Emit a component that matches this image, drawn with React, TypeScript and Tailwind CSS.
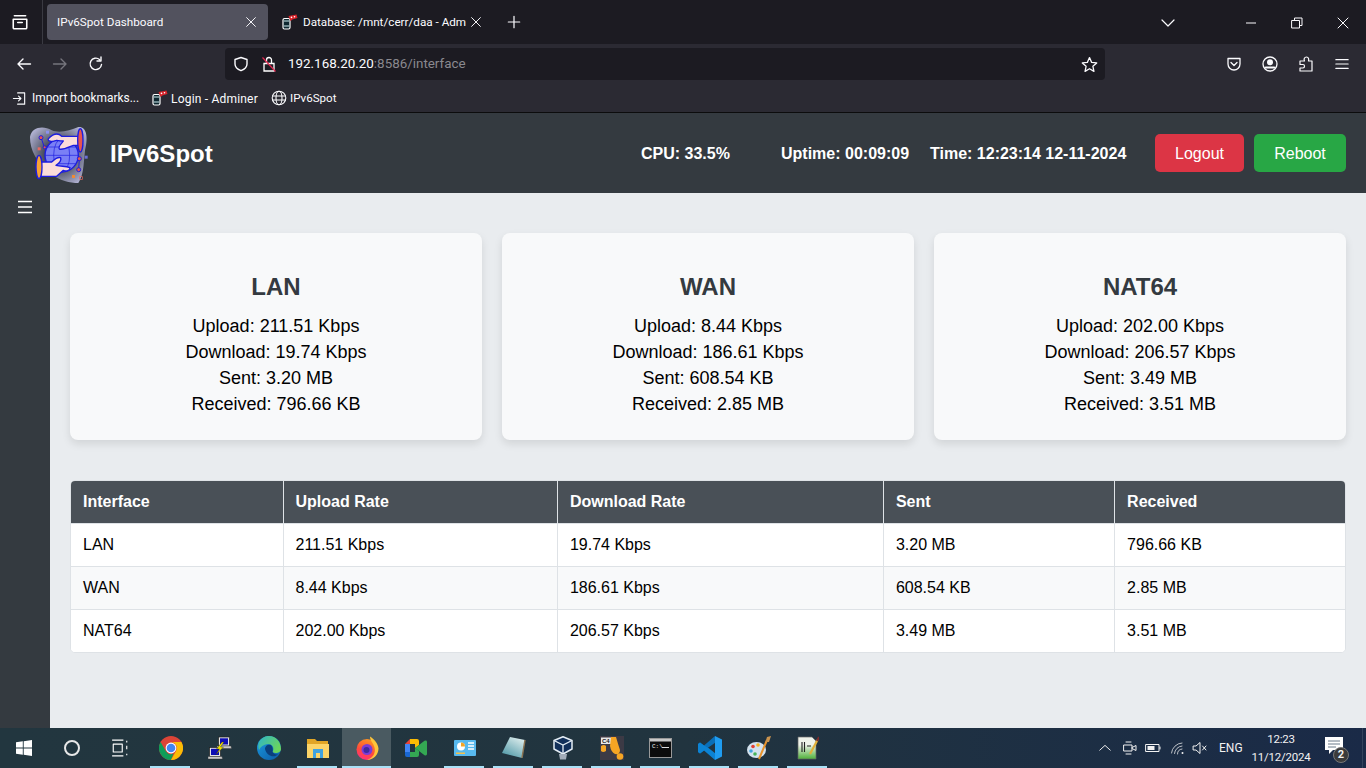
import type { ReactNode } from "react";

const cards = [
  { name: "LAN", upload: "211.51 Kbps", download: "19.74 Kbps", sent: "3.20 MB", received: "796.66 KB" },
  { name: "WAN", upload: "8.44 Kbps", download: "186.61 Kbps", sent: "608.54 KB", received: "2.85 MB" },
  { name: "NAT64", upload: "202.00 Kbps", download: "206.57 Kbps", sent: "3.49 MB", received: "3.51 MB" },
];

function Ic({ size = 16, children, className = "" }: { size?: number; children: ReactNode; className?: string }) {
  return (
    <svg width={size} height={size} viewBox="0 0 16 16" fill="none" stroke="currentColor" strokeWidth="1.4" strokeLinecap="round" strokeLinejoin="round" className={`shrink-0 ${className}`}>
      {children}
    </svg>
  );
}

function AdminerIcon() {
  return (
    <svg width="16" height="16" viewBox="0 0 16 16" className="shrink-0">
      <rect x="1" y="4.5" width="7" height="10.5" rx="1.5" fill="#0f2730" stroke="#fff" strokeWidth="1.2" />
      <path d="M2 7 H7 M2 12 H7" stroke="#cfeef0" strokeWidth="1" />
      <path d="M6.5 2 L14.5 0.5 L15.5 4 L10.5 5.5 L8.5 7 Z" fill="#d8232a" />
      <circle cx="9.5" cy="3.4" r=".8" fill="#fff" />
      <circle cx="12.5" cy="2.7" r=".8" fill="#fff" />
    </svg>
  );
}

function Logo() {
  const blue = "#1c1ce0";
  return (
    <svg width="80" height="72" viewBox="0 0 240 216" className="shrink-0">
      <defs>
        <radialGradient id="blob" cx="0.5" cy="0.5" r="0.62">
          <stop offset="0.35" stopColor="#3f4352" />
          <stop offset="1" stopColor="#b4b5d6" />
        </radialGradient>
      </defs>
      <path d="M30 60 C35 30 70 25 95 40 C120 50 150 40 175 30 C200 28 205 60 195 100 C190 150 190 175 175 198 C150 198 120 190 90 170 C50 135 30 100 30 60 Z" fill="url(#blob)" />
      <circle cx="125" cy="115" r="50" fill="#7a80f5" stroke={blue} strokeWidth="4" />
      <ellipse cx="125" cy="115" rx="24" ry="50" fill="none" stroke={blue} strokeWidth="2" />
      <path d="M75 115 H175 M84 90 H166 M84 140 H166" stroke={blue} strokeWidth="2" />
      <path d="M178 58 H125 C115 48 100 50 85 65 C82 74 95 75 110 70 C120 72 125 72 130 72 C125 80 113 88 118 96 C130 100 150 88 160 85 H178 Z" fill="#fbdcd9" stroke={blue} strokeWidth="4" strokeLinejoin="round" />
      <path d="M60 135 H95 C105 125 115 120 122 122 C125 130 115 140 108 145 C125 150 135 145 150 152 C150 160 140 165 130 160 L110 178 H60 Z" fill="#fbdcd9" stroke={blue} strokeWidth="4" strokeLinejoin="round" />
      <ellipse cx="181" cy="70" rx="8" ry="35" fill="#e8544e" stroke={blue} strokeWidth="4" />
      <ellipse cx="57" cy="150" rx="9" ry="35" fill="#f7a234" stroke={blue} strokeWidth="4" />
      <path d="M63 62 L73 90 M178 125 L176 158" stroke={blue} strokeWidth="3" />
      <circle cx="63" cy="62" r="6" fill="#e8544e" stroke={blue} strokeWidth="3" />
      <circle cx="74" cy="91" r="4.5" fill="#e8544e" stroke={blue} strokeWidth="3" />
      <circle cx="178" cy="125" r="6" fill="#e8544e" stroke={blue} strokeWidth="3" />
      <circle cx="176" cy="158" r="6" fill="#e8544e" stroke={blue} strokeWidth="3" />
      <rect x="78" y="41" width="9" height="9" fill="#8d91ee" />
      <rect x="53" y="91" width="9" height="9" fill="#e76a62" />
      <rect x="194" y="116" width="9" height="9" fill="#6c70d8" />
      <rect x="156" y="174" width="9" height="9" fill="#f08a34" />
      <rect x="179" y="179" width="8" height="8" fill="none" stroke="#e76a62" strokeWidth="2" />
    </svg>
  );
}

function BrowserChrome() {
  return (
    <div className="shrink-0 text-[#fbfbfe] font-['Roboto',sans-serif]">
      <div className="h-[44px] bg-[#1c1b22] flex items-center">
        <div className="w-[43px] h-full flex items-center justify-center border-r border-[#3a3a42]">
          <Ic size={18} className="text-white -ml-[3px]">
            <path d="M3 2.5 H13 M2 5.5 H14 V13 Q14 14 13 14 H3 Q2 14 2 13 Z M6 8.5 H10" />
          </Ic>
        </div>
        <div className="ml-[4px] w-[221px] h-[36px] rounded-[4px] bg-[#52525e] flex items-center justify-between pl-[10px] pr-[10px]">
          <span className="text-[11.7px] text-[#fbfbfe] pt-[1px]">IPv6Spot Dashboard</span>
          <Ic size={14}><path d="M3 3 L13 13 M13 3 L3 13" strokeWidth="1.1" /></Ic>
        </div>
        <div className="w-[222px] h-[36px] flex items-center pl-[14px]">
          <AdminerIcon />
          <span className="ml-[5px] text-[11.7px] w-[164px] whitespace-nowrap pt-[1px]">Database: /mnt/cerr/daa - Adm</span>
          <Ic size={14} className="ml-[2px]"><path d="M3 3 L13 13 M13 3 L3 13" strokeWidth="1.1" /></Ic>
        </div>
        <div className="ml-[17px] w-[14px] flex items-center justify-center">
          <Ic size={14}><path d="M8 1.5 V14.5 M1.5 8 H14.5" /></Ic>
        </div>
        <div className="ml-auto flex items-center pt-[1px]">
          <Ic size={16} className="mr-[52px]"><path d="M2 5 L8 11 L14 5" strokeWidth="1.2" /></Ic>
          <div className="w-[46px] flex justify-center"><Ic size={16}><path d="M3 8 H13" strokeWidth="1" strokeLinecap="butt" /></Ic></div>
          <div className="w-[46px] flex justify-center"><Ic size={16}><path d="M3 5.5 H10.5 V13 H3 Z M5.5 5.5 V3 H13 V10.5 H10.5" strokeWidth="1" /></Ic></div>
          <div className="w-[46px] flex justify-center"><Ic size={16}><path d="M3 3 L13 13 M13 3 L3 13" strokeWidth="1" /></Ic></div>
        </div>
      </div>
      <div className="h-[40px] bg-[#2b2a33] flex items-center">
        <div className="w-[48px] flex justify-center"><Ic size={16}><path d="M14.5 8 H2 M7 3 L2 8 L7 13" /></Ic></div>
        <div className="w-[24px] flex justify-center text-[#76757d]"><Ic size={16}><path d="M1.5 8 H14 M9 3 L14 8 L9 13" /></Ic></div>
        <div className="w-[48px] flex justify-center"><Ic size={16}><path d="M13.5 8.5 A5.7 5.7 0 1 1 11.5 3.5 M13 1 V5 H9" /></Ic></div>
        <div className="ml-[105px] w-[880px] h-[32px] rounded-[4px] bg-[#1c1b22] flex items-center">
          <Ic size={16} className="ml-[8px]"><path d="M8 1.5 L14 3.5 V8 C14 11 11 13.5 8 14.7 C5 13.5 2 11 2 8 V3.5 Z" /></Ic>
          <svg width="16" height="16" viewBox="0 0 16 16" className="ml-[12px] shrink-0" fill="none">
            <path d="M3 7.5 H13 V15 H3 Z M5.5 7.5 V4 A2.5 2.5 0 0 1 10.5 4 V7.5" stroke="#fff" strokeWidth="1.3" />
            <path d="M1.5 1.5 L14.5 15.5" stroke="#e22850" strokeWidth="1.2" />
          </svg>
          <span className="ml-[11px] text-[13.4px] text-[#fbfbfe] pt-[1px]">192.168.20.20<span className="text-[#8a898f]">:8586/interface</span></span>
          <Ic size={17} className="ml-auto mr-[7px]"><path d="M8 1.5 L10 6 L14.8 6.5 L11.2 9.7 L12.2 14.5 L8 12 L3.8 14.5 L4.8 9.7 L1.2 6.5 L6 6 Z" strokeWidth="1.2" /></Ic>
        </div>
        <div className="ml-auto flex items-center">
          <div className="w-[37px] flex justify-center"><Ic size={16}><path d="M2 2.5 H14 V8 A6 6 0 0 1 2 8 Z M5 6.5 L8 9.5 L11 6.5" strokeWidth="1.3" /></Ic></div>
          <div className="w-[36px] flex justify-center"><Ic size={16}><circle cx="8" cy="8" r="7" strokeWidth="1.3" /><circle cx="8" cy="6.3" r="2.3" fill="currentColor" /><path d="M3.8 11.5 H12.2" strokeWidth="2" /></Ic></div>
          <div className="w-[36px] flex justify-center"><Ic size={16}><path d="M6.5 5 C5.5 3 6.5 1 8.5 1 C10.5 1 11 3 10.5 5 H14 V15 H2 V12 H5 C7 12 7 8.5 5 8.5 H2 V5 Z" strokeWidth="1.2" /></Ic></div>
          <div className="w-[36px] mr-[6px] flex justify-center"><Ic size={14}><path d="M1 3 H15 M1 8 H15 M1 13 H15" /></Ic></div>
        </div>
      </div>
      <div className="h-[28px] bg-[#2b2a33] flex items-center pl-[12px] text-[12px] border-b border-[#0c0c0d] box-content">
        <Ic size={15}><path d="M6 2 H13.5 V14 H6 M1.5 8 H9.5 M7 5.5 L9.5 8 L7 10.5" strokeWidth="1.2" /></Ic>
        <span className="ml-[5px] w-[107px] whitespace-nowrap pt-[1px] text-[11.9px]">Import bookmarks...</span>
        <span className="ml-[13px]"><AdminerIcon /></span>
        <span className="ml-[3px] w-[87px] whitespace-nowrap pt-[1px] tracking-[0.2px]">Login - Adminer</span>
        <span className="ml-[13px]">
          <Ic size={16}>
            <circle cx="8" cy="8" r="6.8" strokeWidth="1.1" />
            <ellipse cx="8" cy="8" rx="3" ry="6.8" strokeWidth="1.1" />
            <path d="M1.5 6 H14.5 M1.5 10 H14.5" strokeWidth="1.1" />
          </Ic>
        </span>
        <span className="ml-[3px] pt-[1px] text-[11.6px]">IPv6Spot</span>
      </div>
    </div>
  );
}

function Header() {
  return (
    <header className="h-[80px] bg-[#343a40] shrink-0 flex items-center pl-[20px] pr-[20px] text-white font-['Liberation_Sans',sans-serif]">
      <Logo />
      <h1 className="ml-[10px] text-[24px] font-bold pt-[1px]">IPv6Spot</h1>
      <div className="ml-auto flex items-center text-[16px] font-bold pt-[1px]">
        <span className="w-[140px]">CPU: 33.5%</span>
        <span className="w-[149px]">Uptime: 00:09:09</span>
        <span className="w-[225px]">Time: 12:23:14 12-11-2024</span>
      </div>
      <button className="w-[89px] h-[38px] rounded-[5px] bg-[#dc3545] text-[16px] pt-[1px]">Logout</button>
      <button className="ml-[10px] w-[92px] h-[38px] rounded-[5px] bg-[#28a745] text-[16px] pt-[1px]">Reboot</button>
    </header>
  );
}

function Main() {
  return (
    <main className="flex-1 bg-[#e9ecef] pt-[40px] px-[20px] text-black font-['Liberation_Sans',sans-serif]">
      <div className="grid grid-cols-3 gap-[20px]">
        {cards.map((c) => (
          <div key={c.name} className="h-[207px] rounded-[8px] bg-[#f8f9fa] shadow-[0_4px_8px_rgba(0,0,0,0.1)] pt-[40px] text-center">
            <h3 className="text-[24px] leading-[28px] font-bold text-[#343a40] mb-[12px]">{c.name}</h3>
            <p className="text-[18px] leading-[26px]">Upload: {c.upload}</p>
            <p className="text-[18px] leading-[26px]">Download: {c.download}</p>
            <p className="text-[18px] leading-[26px]">Sent: {c.sent}</p>
            <p className="text-[18px] leading-[26px]">Received: {c.received}</p>
          </div>
        ))}
      </div>
      <div className="mt-[40px] rounded-[5px] overflow-hidden border border-[#dee2e6] bg-white">
        <table className="w-full table-fixed border-collapse text-[16px]">
          <colgroup>
            <col className="w-[212px]" />
            <col className="w-[274.4px]" />
            <col className="w-[326px]" />
            <col className="w-[231.2px]" />
            <col />
          </colgroup>
          <thead>
            <tr className="h-[42px] bg-[#495057] text-white font-bold text-left">
              {["Interface", "Upload Rate", "Download Rate", "Sent", "Received"].map((h, i) => (
                <th key={h} className={`px-[12px] ${i > 0 ? "border-l border-[#dee2e6]" : ""}`}>{h}</th>
              ))}
            </tr>
          </thead>
          <tbody>
            {cards.map((c, r) => (
              <tr key={c.name} className={`h-[43px] border-t border-[#dee2e6] ${r === 1 ? "bg-[#f8f9fa]" : "bg-white"}`}>
                <td className="px-[12px]">{c.name}</td>
                <td className="px-[12px] border-l border-[#dee2e6]">{c.upload}</td>
                <td className="px-[12px] border-l border-[#dee2e6]">{c.download}</td>
                <td className="px-[12px] border-l border-[#dee2e6]">{c.sent}</td>
                <td className="px-[12px] border-l border-[#dee2e6]">{c.received}</td>
              </tr>
            ))}
          </tbody>
        </table>
      </div>
    </main>
  );
}

function Slot({ active, open, children }: { active?: boolean; open?: boolean; children: ReactNode }) {
  return (
    <div className={`relative w-[49px] h-[40px] flex items-center justify-center ${active ? "bg-[#4a5a61]" : ""}`}>
      {children}
      {open && <div className={`absolute bottom-0 h-[2px] bg-[#a9e1f7] ${active ? "left-0 right-0" : "left-[4px] right-[5px]"}`} />}
    </div>
  );
}

function Taskbar() {
  return (
    <div className="h-[40px] shrink-0 flex items-center text-white bg-gradient-to-r from-[#22363f] via-[#21343f] to-[#1a2a47] font-['Roboto',sans-serif]">
      <div className="w-[48px] flex justify-center">
        <svg width="16" height="16" viewBox="0 0 16 16" fill="#fff"><path d="M0 2.3 L6.8 1.3 V7.5 H0 Z M7.7 1.2 L16 0 V7.5 H7.7 Z M0 8.4 H6.8 V14.7 L0 13.7 Z M7.7 8.4 H16 V16 L7.7 14.8 Z" /></svg>
      </div>
      <div className="w-[48px] flex justify-center">
        <div className="w-[16px] h-[16px] rounded-full border-2 border-[#e8e8e8]" />
      </div>
      <div className="w-[48px] flex justify-center">
        <Ic size={18}><path d="M1 1 H11 M1 15 H11 M2 4.5 H10 V11.5 H2 Z M14 1.5 V3 M14 6 V9 M14 13 V14.5" strokeWidth="1" strokeLinecap="butt" /></Ic>
      </div>
      <div className="ml-[2px] flex items-center">
        <Slot open>
          <svg width="24" height="24" viewBox="0 0 24 24">
            <circle cx="12" cy="12" r="12" fill="#db4437" />
            <path d="M12 24 A12 12 0 0 1 1.6 6 L7 15.5 A6 6 0 0 0 14.5 17.5 Z" fill="#0f9d58" />
            <path d="M22.4 6 A12 12 0 0 1 12 24 L17 15 A6 6 0 0 0 12 6 Z" fill="#fbbc05" />
            <circle cx="12" cy="12" r="5.4" fill="#fff" />
            <circle cx="12" cy="12" r="4.3" fill="#4285f4" />
          </svg>
        </Slot>
        <Slot>
          <svg width="24" height="24" viewBox="0 0 24 24">
            <rect x="10.5" y="1" width="11" height="9" fill="#e4e4e4" stroke="#222" strokeWidth=".7" />
            <rect x="12" y="2.3" width="8" height="6.2" fill="#0d0db5" />
            <path d="M9 10 H23 L23.5 12.5 H9 Z" fill="#c9c9c9" stroke="#333" strokeWidth=".4" />
            <rect x="1.5" y="11.5" width="11" height="9" fill="#e4e4e4" stroke="#222" strokeWidth=".7" />
            <rect x="3" y="12.8" width="8" height="6.2" fill="#0d0db5" />
            <path d="M0 20.5 H14 L14.5 23 H0 Z" fill="#c9c9c9" stroke="#333" strokeWidth=".4" />
            <path d="M14 6 L8.5 13 H11.5 L8 18.5 L15.5 11 H12.5 L16 6 Z" fill="#f7e600" stroke="#222" strokeWidth=".4" />
          </svg>
        </Slot>
        <Slot>
          <svg width="24" height="24" viewBox="0 0 24 24">
            <defs>
              <linearGradient id="edge1" x1="0" y1="0" x2="1" y2="1">
                <stop offset="0" stopColor="#1b9de2" />
                <stop offset="1" stopColor="#0c59a4" />
              </linearGradient>
              <linearGradient id="edge2" x1="0" y1="0" x2="1" y2="0.5">
                <stop offset="0" stopColor="#2fb4c8" />
                <stop offset="1" stopColor="#6ad45d" />
              </linearGradient>
            </defs>
            <circle cx="12" cy="12" r="12" fill="url(#edge1)" />
            <path d="M2 6 C5 1 9 0 12 0 C19 0 24 6 24 13 C24 17 18 18 15.5 16 C18 12 15 7.5 10.5 8 C6.5 8.5 3.5 11 2 14 C1 11 1 8 2 6 Z" fill="url(#edge2)" />
            <path d="M8 13 C8 9 12 8 14 9 C16 11 16 14 15.5 16 C17 18 19 19 21 18 C18 22 10 21 8 13 Z" fill="#0b3f7c" />
          </svg>
        </Slot>
        <Slot open>
          <svg width="22" height="20" viewBox="0 0 22 20">
            <path d="M0 1 H8 L10 3 H21 V8 H0 Z" fill="#e0a526" />
            <rect x="0" y="6" width="22" height="14" fill="#fbd468" />
            <rect x="6" y="11" width="10" height="9" fill="#3fa2e0" />
            <rect x="9" y="15" width="4" height="5" fill="#fbd468" />
          </svg>
        </Slot>
        <Slot active open>
          <svg width="24" height="24" viewBox="0 0 24 24">
            <defs>
              <linearGradient id="fox" x1="0.7" y1="0" x2="0.3" y2="1">
                <stop offset="0" stopColor="#ff9a1f" />
                <stop offset="0.6" stopColor="#ff4a3c" />
                <stop offset="1" stopColor="#ff2f7e" />
              </linearGradient>
            </defs>
            <circle cx="12" cy="13.5" r="10.5" fill="url(#fox)" />
            <path d="M15 0.5 C19 3 23 7 23.5 12.5 C23.5 19 18 24 12 24 C18 22 21 17 19.5 11.5 C18.5 7 15 5 15 0.5 Z" fill="#ffc53a" />
            <circle cx="12" cy="13.5" r="5.5" fill="#7c3bd6" />
            <circle cx="11.5" cy="14" r="3" fill="#3f2aa0" />
          </svg>
        </Slot>
        <Slot>
          <svg width="22" height="18" viewBox="0 0 22 18">
            <path d="M5 0 L0 5 H5 Z" fill="#ea4335" />
            <rect x="0" y="5" width="5" height="8" fill="#4285f4" />
            <path d="M0 13 H5 V18 H2 Q0 18 0 16 Z" fill="#1967d2" />
            <path d="M5 0 H12 Q14 0 14 2 V6 L10 9 V5 H5 Z" fill="#fbbc04" />
            <path d="M5 13 H10 V9 L14 12 V16 Q14 18 12 18 H5 Z" fill="#34a853" />
            <path d="M14 6 L19.5 1.8 Q22 1 22 3 V15 Q22 17 19.5 16.2 L14 12 L10 9 Z" fill="#34a853" />
          </svg>
        </Slot>
        <Slot open>
          <svg width="22" height="16" viewBox="0 0 22 16">
            <rect width="22" height="16" rx="1" fill="#58b9ee" />
            <circle cx="7" cy="6.5" r="4" fill="#fff" />
            <path d="M7 6.5 V2.5 A4 4 0 0 1 11 6.5 Z" fill="#f5a524" />
            <path d="M14 3 H20 M14 6 H20 M14 9 H20" stroke="#fff" strokeWidth="1.3" />
            <rect x="2" y="12.5" width="9" height="1.5" fill="#f5c04a" />
          </svg>
        </Slot>
        <Slot open>
          <svg width="24" height="24" viewBox="0 0 24 24">
            <defs>
              <linearGradient id="note" x1="0.8" y1="0" x2="0.2" y2="1">
                <stop offset="0" stopColor="#dfeeee" />
                <stop offset="1" stopColor="#4d97a6" />
              </linearGradient>
            </defs>
            <path d="M8 1 L23 4 L20 22 L0 17 Z" fill="url(#note)" />
            <path d="M23 4 L20 22" stroke="#8a7352" strokeWidth="1.5" />
          </svg>
        </Slot>
        <Slot open>
          <svg width="20" height="24" viewBox="0 0 20 24">
            <path d="M10 0.8 L19 4.5 V13 L10 18 L1 13 V4.5 Z" fill="#12305a" stroke="#e4edf5" strokeWidth="1.5" strokeLinejoin="round" />
            <path d="M1 4.5 L10 9 L19 4.5 M10 9 V18" stroke="#e4edf5" strokeWidth="1.3" fill="none" />
            <path d="M6 18 H14 L13 23.5 H7 Z" fill="#a3adb9" />
          </svg>
        </Slot>
        <Slot open>
          <svg width="24" height="24" viewBox="0 0 24 24">
            <rect width="24" height="24" fill="#3c3a45" />
            <rect x="1" y="1.5" width="10" height="6.5" fill="#e8e8e8" />
            <text x="2" y="7" fontSize="6" fontWeight="700" fill="#222" fontFamily="Liberation Sans, sans-serif">C4</text>
            <path d="M1 10 Q4 8 6 10 V15 Q3 17 1 15 Z" fill="#f5a524" />
            <path d="M11 1 H16 Q18 8 20 14 Q20 19 15 18 Q11 16 10 10 Z" fill="#f5a524" />
            <circle cx="20" cy="20.5" r="3.3" fill="#f5a524" />
          </svg>
        </Slot>
        <Slot open>
          <svg width="23" height="20" viewBox="0 0 23 20">
            <rect x=".5" y=".5" width="22" height="19" fill="#0c0c0c" stroke="#999" />
            <rect x="1" y="1" width="21" height="2.5" fill="#c9c9c9" />
            <text x="3" y="9.5" fontSize="6" fill="#eee" fontFamily="Liberation Mono, monospace">C:\</text>
            <path d="M13 9.5 H20" stroke="#ddd" strokeWidth="1" />
          </svg>
        </Slot>
        <Slot open>
          <svg width="24" height="24" viewBox="0 0 24 24">
            <path d="M17 0 L17.5 6.5 L6 14.5 L2 17.5 L0 16 V8 L2 6.5 L6 9.5 Z" fill="#0a6fb8" />
            <path d="M0 16 L2 17.5 L6 14.5 L17 24 L17.5 17.5 L10.5 12 L6 9.5 L2 6.5 L0 8 Z" fill="#0c83d4" />
            <path d="M17 0 L24 3.5 V20.5 L17 24 Z" fill="#1f9cf0" />
          </svg>
        </Slot>
        <Slot open>
          <svg width="24" height="24" viewBox="0 0 24 24">
            <ellipse cx="9.5" cy="14" rx="9.5" ry="8" fill="#d3e2ee" />
            <circle cx="6" cy="10.5" r="1.8" fill="#e23f33" />
            <circle cx="11" cy="9" r="1.8" fill="#f5b324" />
            <circle cx="4" cy="15" r="1.8" fill="#41a4de" />
            <circle cx="8" cy="18" r="1.8" fill="#45b35a" />
            <path d="M12 23 L20 4" stroke="#e8932c" strokeWidth="2" />
            <path d="M18.5 6 L20 1 L24 0 L22 6 Z" fill="#c9934e" />
          </svg>
        </Slot>
        <Slot open>
          <svg width="22" height="24" viewBox="0 0 22 24">
            <defs>
              <linearGradient id="npp" x1="0" y1="0" x2="0" y2="1">
                <stop offset="0.35" stopColor="#eef2ea" />
                <stop offset="1" stopColor="#4fb13a" />
              </linearGradient>
            </defs>
            <path d="M1 1 H15 L19 5 V23 H1 Z" fill="url(#npp)" stroke="#666" strokeWidth=".7" />
            <path d="M5 6 V16 M7.5 6 V16 M10 10 H14" stroke="#222" strokeWidth="1.1" />
            <path d="M13 18 L20.5 4" stroke="#e0b03a" strokeWidth="2.2" />
            <path d="M20 5 L22 1" stroke="#7d2b2b" strokeWidth="2" />
          </svg>
        </Slot>
      </div>
      <div className="ml-auto flex items-center text-[12px] text-[#f2f2f2]">
        <Ic size={14}><path d="M2 10.5 L8 5 L14 10.5" strokeWidth="1.1" /></Ic>
        <Ic size={16} className="ml-[10px]"><path d="M2 5 H10 V11 H2 Z M10 7.5 L14 5.5 V10.5 L10 8.5 M4 2 H9 M4 14 H9" strokeWidth="1" /></Ic>
        <Ic size={16} className="ml-[7px]"><rect x="1" y="4.5" width="13" height="7" strokeWidth="1" /><rect x="2.5" y="6" width="7" height="4" fill="currentColor" stroke="none" /><path d="M15 7 V9" strokeWidth="1" /></Ic>
        <Ic size={16} className="ml-[9px]"><path d="M1.5 13 A11 11 0 0 1 12 3 M4.5 13.5 A8 8 0 0 1 12 6 M7.5 14 A5 5 0 0 1 12 9" strokeWidth="1" opacity=".75" /><circle cx="12.5" cy="13" r="1" fill="currentColor" stroke="none" /></Ic>
        <Ic size={16} className="ml-[6px]"><path d="M1.5 6 H4 L8 2.5 V13.5 L4 10 H1.5 Z M10.5 6 L14 10 M14 6 L10.5 10" strokeWidth="1" /></Ic>
        <span className="ml-[11px] w-[24px]">ENG</span>
        <div className="ml-[8px] w-[60px] text-center leading-[18px] text-[11.5px] tracking-[-0.2px]">
          <div>12:23</div>
          <div>11/12/2024</div>
        </div>
        <div className="relative ml-[14px] w-[24px] h-[24px]">
          <svg width="18" height="17" viewBox="0 0 18 17" className="mt-[1px]"><path d="M0 0 H18 V13 H8 L4 17 V13 H0 Z" fill="#fff" /><path d="M3 4 H15 M3 7 H15 M3 10 H11" stroke="#6b7a8a" strokeWidth="1" /></svg>
          <div className="absolute right-0 bottom-[-3px] w-[16px] h-[16px] rounded-full bg-[#3b3b3b] border border-[#777] text-[11px] font-bold leading-[14px] text-center">2</div>
        </div>
        <div className="ml-[13px] mr-[3px] w-[1px] h-[40px] bg-[#33435c]" />
      </div>
    </div>
  );
}

export default function App() {
  return (
    <div className="w-[1366px] h-[768px] flex flex-col overflow-hidden">
      <BrowserChrome />
      <Header />
      <div className="flex-1 flex min-h-0">
        <aside className="w-[50px] bg-[#343a40] flex justify-center pt-[7px] shrink-0">
          <svg width="14" height="14" viewBox="0 0 14 14" stroke="#fff" strokeWidth="1.6"><path d="M0 1.5 H14 M0 7 H14 M0 12.5 H14" /></svg>
        </aside>
        <Main />
      </div>
      <Taskbar />
    </div>
  );
}
